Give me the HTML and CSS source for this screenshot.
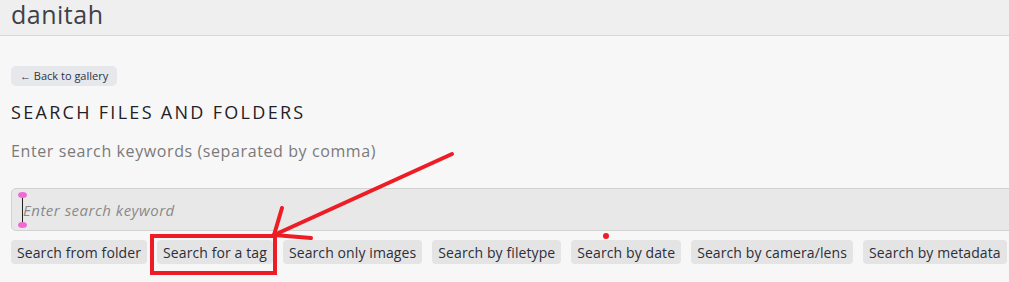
FILE: index.html
```html
<!DOCTYPE html>
<html lang="en">
	<head>
		<meta charset="UTF-8">
		<meta name="viewport" content="width=device-width, initial-scale=1.0">
		<title>danitah - Search</title>
		<link rel="stylesheet" href="styles.css">
	</head>
	<body>
		<header class="topbar">
			<h1 class="site-title">danitah</h1>
		</header>
		<main class="content">
			<a href="#" class="back-btn">&larr; Back to gallery</a>
			<h2 class="section-title">Search files and folders</h2>
			<p class="hint">Enter search keywords (separated by comma)</p>
			<div class="search-field">
				<input type="text" class="search-input" placeholder="Enter search keyword">
				<span class="caret"></span>
				<span class="handle handle-top"></span>
				<span class="handle handle-bottom"></span>
			</div>
			<div class="filter-row">
				<button class="filter-btn">Search from folder</button>
				<button class="filter-btn">Search for a tag</button>
				<button class="filter-btn">Search only images</button>
				<button class="filter-btn">Search by filetype</button>
				<button class="filter-btn">Search by date</button>
				<button class="filter-btn">Search by camera/lens</button>
				<button class="filter-btn">Search by metadata</button>
			</div>
		</main>
		<svg class="markup" width="1009" height="282" viewBox="0 0 1009 282">
			<rect x="152" y="236" width="123" height="37" fill="none" stroke="#ee1c25" stroke-width="4"/>
			<g stroke="#ee1c25" stroke-width="4" stroke-linecap="round" fill="none">
				<path d="M452 154 L274 235"/>
				<path d="M274 235 L282 208"/>
				<path d="M274 235 L311 238"/>
			</g>
			<circle cx="606" cy="236" r="3" fill="#ee1c25"/>
		</svg>
	</body>
</html>
```
FILE: styles.css
```css
:root{
	--page-bg:#f7f7f7;
	--bar-bg:#efefef;
	--chip-bg:#e4e4e4;
	--text-dark:#2b2f3a;
}
html,body{
	margin:0;
	padding:0;
}
body{
	background-color:var(--page-bg);
	font-family:"Open Sans", "Liberation Sans", sans-serif;
	width:1009px;
	height:282px;
	overflow:hidden;
	position:relative;
}
.topbar{
	background-color:var(--bar-bg);
	border-bottom:1px solid #d9d9d9;
	height:35px;
	padding:0 11px;
	overflow:hidden;
}
.site-title{
	margin:0;
	font-weight:400;
	font-size:25px;
	line-height:28px;
	color:#3e4147;
	letter-spacing:0.5px;
}
.content{
	padding:30px 0 0 11px;
}
.back-btn{
	display:block;
	width:max-content;
	background-color:#e7e8ec;
	color:#2d3346;
	text-decoration:none;
	font-size:11px;
	line-height:20px;
	padding:0 9px;
	border-radius:5px;
}
.section-title{
	margin:14px 0 0;
	font-weight:400;
	font-size:18px;
	line-height:24px;
	text-transform:uppercase;
	letter-spacing:2.3px;
	color:#1f2127;
}
.hint{
	margin:16px 0 0;
	font-size:16px;
	line-height:22px;
	letter-spacing:0.6px;
	color:#7a7a7a;
}
.search-field{
	position:relative;
	margin-top:26px;
	margin-right:-20px;
}
.search-input{
	display:block;
	box-sizing:border-box;
	width:100%;
	height:43px;
	border:1px solid #d2d2d2;
	border-radius:5px;
	background-color:#e8e8e8;
	padding:0 11px;
	font-family:inherit;
	font-size:15px;
	letter-spacing:0.5px;
	outline:none;
}
.search-input::placeholder{
	font-style:italic;
	color:#8a8a8a;
}
.caret{
	position:absolute;
	left:11px;
	top:8px;
	width:1px;
	height:27px;
	background-color:#222;
}
.handle{
	position:absolute;
	left:7px;
	width:9px;
	height:6px;
	border-radius:50%;
	background-color:#f06ad6;
}
.handle-top{
	top:4px;
}
.handle-bottom{
	top:34px;
}
.filter-row{
	display:flex;
	gap:10px;
	margin-top:9px;
}
.filter-btn{
	font-family:inherit;
	font-size:14px;
	letter-spacing:0.1px;
	color:var(--text-dark);
	background-color:var(--chip-bg);
	border:none;
	border-radius:4px;
	height:24px;
	padding:0 6px;
	white-space:nowrap;
}
.markup{
	position:absolute;
	left:0;
	top:0;
	pointer-events:none;
}
```
